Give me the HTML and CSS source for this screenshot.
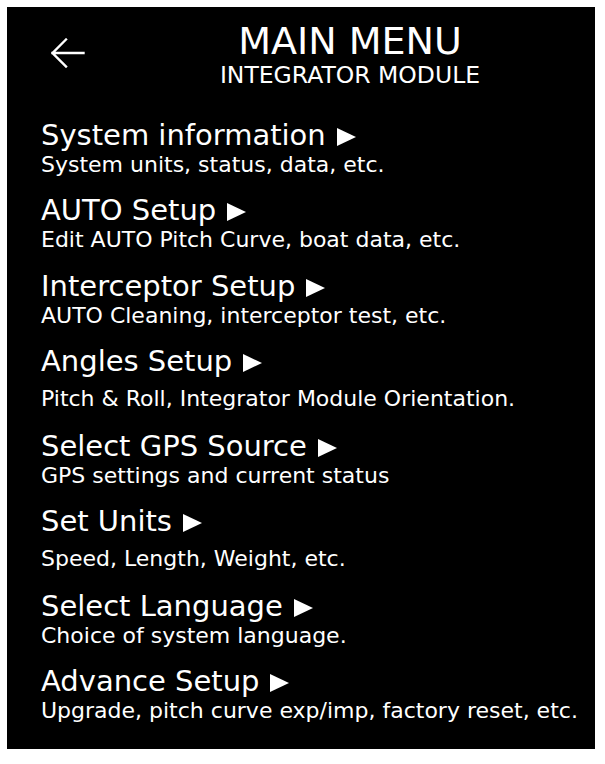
FILE: index.html
```html
<!DOCTYPE html>
<html lang="en">
<head>
<meta charset="utf-8">
<title>Main Menu</title>
<link rel="stylesheet" href="styles.css">
</head>
<body>
<div class="panel">
  <header class="header">
    <svg class="back" width="34" height="30" viewBox="0 0 34 30" aria-hidden="true">
      <path d="M1.5 15 H32.5 M1.5 15 L15 1.5 M1.5 15 L15 28.5" fill="none" stroke="#fff" stroke-width="2.4" stroke-linecap="square"/>
    </svg>
    <div class="heading">
      <div class="title">MAIN MENU</div>
      <div class="subtitle">INTEGRATOR MODULE</div>
    </div>
  </header>
  <ul class="menu">
    <li class="item">
      <div class="item-title">System information<svg class="tri" width="19" height="18" viewBox="0 0 19 18"><polygon points="0,0 19,9 0,18" fill="#fff"/></svg></div>
      <div class="item-sub">System units, status, data, etc.</div>
    </li>
    <li class="item">
      <div class="item-title">AUTO Setup<svg class="tri" width="19" height="18" viewBox="0 0 19 18"><polygon points="0,0 19,9 0,18" fill="#fff"/></svg></div>
      <div class="item-sub">Edit AUTO Pitch Curve, boat data, etc.</div>
    </li>
    <li class="item">
      <div class="item-title">Interceptor Setup<svg class="tri" width="19" height="18" viewBox="0 0 19 18"><polygon points="0,0 19,9 0,18" fill="#fff"/></svg></div>
      <div class="item-sub">AUTO Cleaning, interceptor test, etc.</div>
    </li>
    <li class="item">
      <div class="item-title">Angles Setup<svg class="tri" width="19" height="18" viewBox="0 0 19 18"><polygon points="0,0 19,9 0,18" fill="#fff"/></svg></div>
      <div class="item-sub spaced">Pitch &amp; Roll, Integrator Module Orientation.</div>
    </li>
    <li class="item">
      <div class="item-title">Select GPS Source<svg class="tri" width="19" height="18" viewBox="0 0 19 18"><polygon points="0,0 19,9 0,18" fill="#fff"/></svg></div>
      <div class="item-sub">GPS settings and current status</div>
    </li>
    <li class="item">
      <div class="item-title">Set Units<svg class="tri" width="19" height="18" viewBox="0 0 19 18"><polygon points="0,0 19,9 0,18" fill="#fff"/></svg></div>
      <div class="item-sub spaced">Speed, Length, Weight, etc.</div>
    </li>
    <li class="item">
      <div class="item-title">Select Language<svg class="tri" width="19" height="18" viewBox="0 0 19 18"><polygon points="0,0 19,9 0,18" fill="#fff"/></svg></div>
      <div class="item-sub">Choice of system language.</div>
    </li>
    <li class="item">
      <div class="item-title">Advance Setup<svg class="tri" width="19" height="18" viewBox="0 0 19 18"><polygon points="0,0 19,9 0,18" fill="#fff"/></svg></div>
      <div class="item-sub">Upgrade, pitch curve exp/imp, factory reset, etc.</div>
    </li>
  </ul>
</div>
</body>
</html>
```
FILE: styles.css
```css
html, body {
  margin: 0;
  padding: 0;
  background: #fff;
}

body {
  font-family: "DejaVu Sans", Verdana, sans-serif;
  color: #fff;
}

.panel {
  margin: 7px 0 0 7px;
  width: 588px;
  height: 742px;
  background: #000;
  box-sizing: border-box;
  padding-top: 17px;
}

.header {
  display: flex;
  align-items: flex-start;
  padding-left: 44px;
}

.back {
  display: block;
  margin-top: 14px;
  flex: none;
}

.heading {
  flex: 1;
  margin-left: 20px;
  text-align: center;
}

.title {
  font-size: 38px;
  line-height: 35px;
}

.subtitle {
  font-size: 23.5px;
  line-height: 26px;
  margin-top: 3px;
}

.menu {
  list-style: none;
  margin: 30px 0 0 0;
  padding: 0 0 0 34px;
  display: flex;
  flex-direction: column;
  gap: 15.3px;
}

.item-title {
  font-size: 29px;
  line-height: 34px;
  white-space: nowrap;
}

.tri {
  margin-left: 11px;
  vertical-align: -1px;
}

.item-sub {
  font-size: 22px;
  line-height: 26px;
  white-space: nowrap;
}

.item-sub.spaced {
  margin-top: 8px;
  padding-bottom: 1.5px;
}
```
